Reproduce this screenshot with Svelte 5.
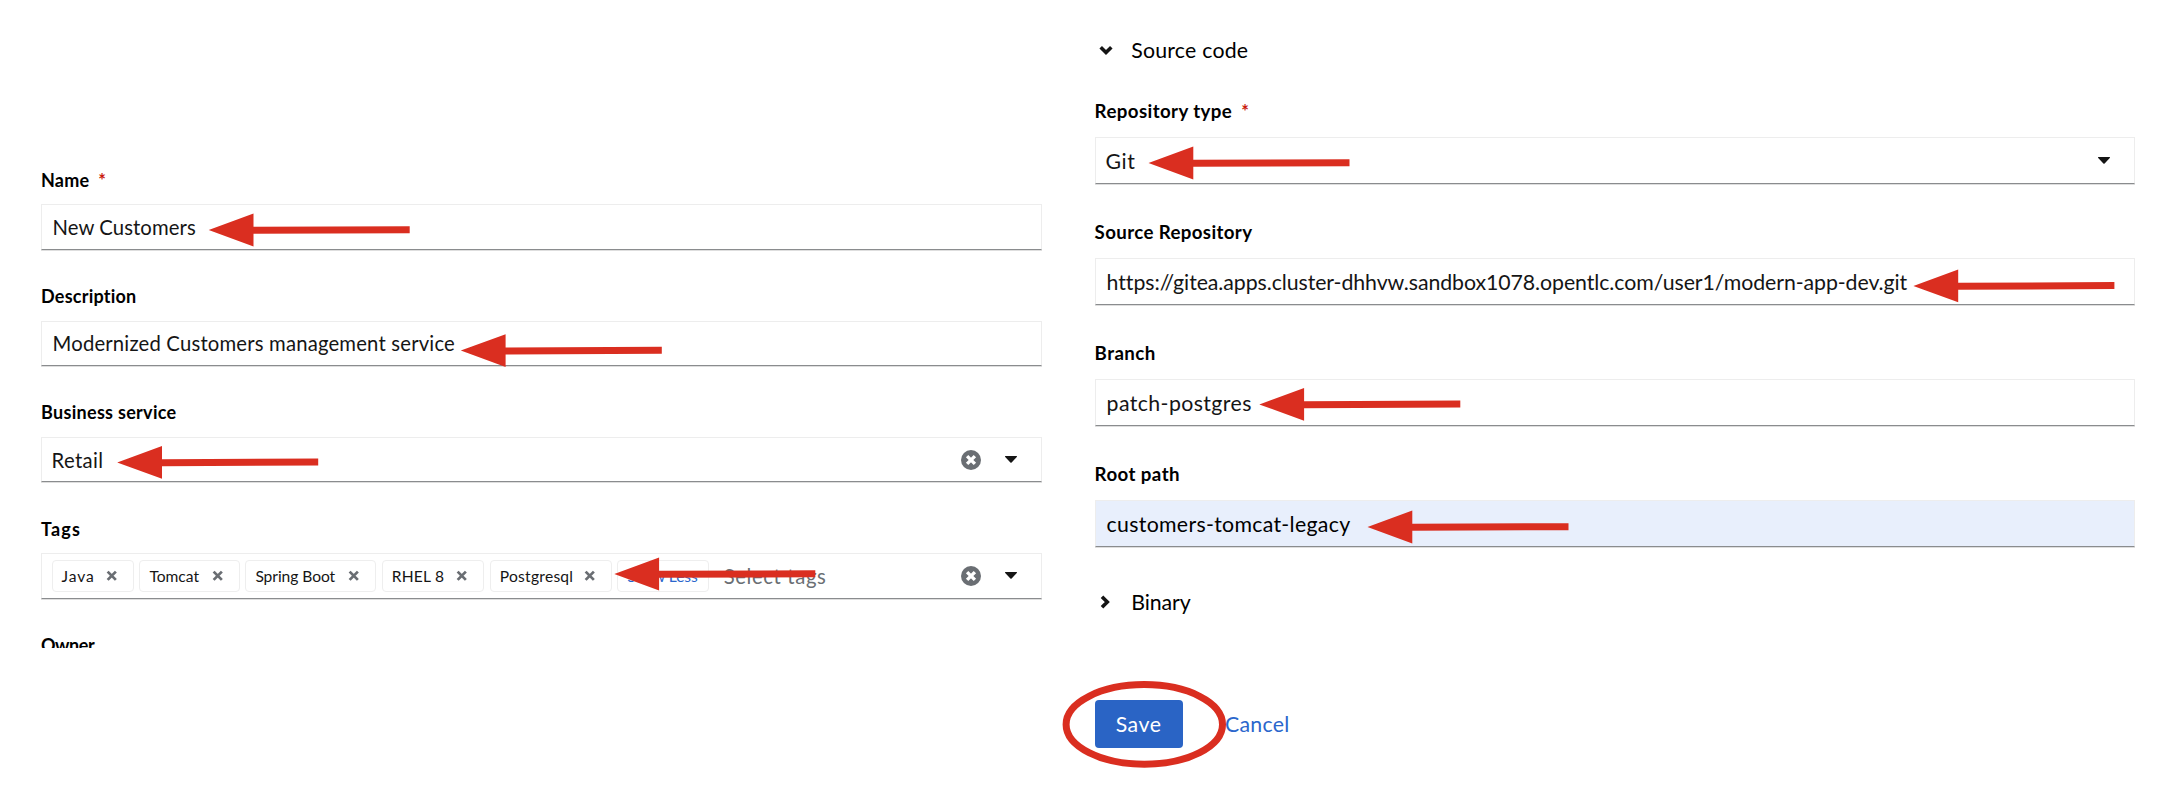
<script>
  const chips = [
    { text: 'Java', size: 82, ink: 31.5 },
    { text: 'Tomcat', size: 100.2, ink: 50 },
    { text: 'Spring Boot', size: 130.7, ink: 80.2 },
    { text: 'RHEL 8', size: 102.2, ink: 51.5 },
    { text: 'Postgresql', size: 121.7, ink: 71.5 }
  ];
  const basics = [
    { label: 'Name', labelInk: 47.4, required: true, value: 'New Customers', ink: 141.8 },
    { label: 'Description', labelInk: 94.4, value: 'Modernized Customers management service', ink: 400.6 },
    { label: 'Business service', labelInk: 134.6, value: 'Retail', ink: 49.6, select: true, clear: true },
    { label: 'Tags', labelInk: 39, chips, select: true, clear: true },
    { label: 'Owner', labelInk: 54, labelOnly: true }
  ];
  const source = [
    { label: 'Repository type', labelInk: 136.7, required: true, value: 'Git', ink: 28.8, select: true },
    {
      label: 'Source Repository', labelInk: 157.6, ink: 799.3,
      value: 'https://gitea.apps.cluster-dhhvw.sandbox1078.opentlc.com/user1/modern-app-dev.git'
    },
    { label: 'Branch', labelInk: 59.2, value: 'patch-postgres', ink: 143.6 },
    { label: 'Root path', labelInk: 83.4, value: 'customers-tomcat-legacy', ink: 243.6, filled: true }
  ];
  const arrows = [
    [208.7, 230], [460.8, 350.6], [117.2, 462.4], [614.3, 574],
    [1148.5, 163], [1913.4, 285.9], [1259.3, 404.4], [1367.5, 527]
  ];

  const ctx = document.createElement('canvas').getContext('2d');
  // Letter spacing that sets a text to a given ink width.
  function track(text, ink, size, weight = 400) {
    ctx.font = `${weight} ${size}px Lato`;
    const m = ctx.measureText(text);
    const natural = m.actualBoundingBoxLeft + m.actualBoundingBoxRight;
    return `${((ink - natural) / (text.length - 1)).toFixed(3)}px`;
  }
</script>

{#snippet field(f, labelSize, size)}
  <div class="field">
    <div class="label">
      <span style:letter-spacing={track(f.label, f.labelInk, labelSize, 700)}>{f.label}</span>
      {#if f.required}<span class="star">*</span>{/if}
    </div>
    {#if !f.labelOnly}
      <div class="control" class:select={f.select} class:filled={f.filled}>
        {#if f.chips}
          <div class="chips">
            {#each f.chips as c}
              <div class="chip" style:width="{c.size}px">
                <span style:letter-spacing={track(c.text, c.ink, 15.6)}>{c.text}</span>
                <svg width="11.5" height="11.5" viewBox="0 0 12 12"><path d="M1.7 1.7L10.3 10.3M10.3 1.7L1.7 10.3" stroke="#6a6e73" stroke-width="2.9" /></svg>
              </div>
            {/each}
            <div class="chip more"><span style:letter-spacing={track('Show Less', 71, 15.6)}>Show Less</span></div>
          </div>
          <span class="placeholder" style:letter-spacing={track('Select tags', 101.5, size)}>Select tags</span>
        {:else}
          <span class="value" style:letter-spacing={track(f.value, f.ink, size)}>{f.value}</span>
        {/if}
        {#if f.clear}
          <svg class="clear" width="20" height="20" viewBox="0 0 20 20">
            <circle cx="10" cy="10" r="10" fill="#6a6e73" />
            <path d="M6.1 6.1L13.9 13.9M13.9 6.1L6.1 13.9" stroke="#fff" stroke-width="3.4" />
          </svg>
        {/if}
        {#if f.select}
          <svg class="caret" width="12" height="7" viewBox="0 0 12 7"><path d="M.3 0H11.7Q12.2 .5 11.8 .9L6.6 6.6Q6 7.1 5.4 6.6L.2 .9Q-.2 .5 .3 0Z" fill="#151515" /></svg>
        {/if}
      </div>
    {/if}
  </div>
{/snippet}

<main>
  <section class="basics">
    {#each basics as f}{@render field(f, 18, 20.3)}{/each}
  </section>

  <section class="source">
    <div class="toggle">
      <svg width="14" height="14" viewBox="0 0 14 14"><path d="M1.7 4.2L7 9.5L12.3 4.2" /></svg>
      <span style:letter-spacing={track('Source code', 116.7, 21.3)}>Source code</span>
    </div>
    <div class="fields">
      {#each source as f}{@render field(f, 18.7, 21.3)}{/each}
    </div>
    <div class="toggle binary">
      <svg width="14" height="14" viewBox="0 0 14 14"><path d="M3 1.7L8.3 7L3 12.3" /></svg>
      <span style:letter-spacing={track('Binary', 58.5, 21.3)}>Binary</span>
    </div>
    <div class="actions">
      <button class="save"><span style:letter-spacing={track('Save', 45, 21.3)}>Save</span></button>
      <button class="cancel"><span style:letter-spacing={track('Cancel', 62.3, 21.3)}>Cancel</span></button>
    </div>
  </section>

  <svg class="marks" width="2168" height="800" viewBox="0 0 2168 800">
    {#each arrows as [x, y]}
      <path transform="translate({x} {y})" d="M0 0L44.8 -16.4V-3.2L201 -3.8V3.2L44.8 3.8V16.4Z" fill="#da2e20" />
    {/each}
    <ellipse cx="1144.3" cy="724.4" rx="78.2" ry="39.8" fill="none" stroke="#da2e20" stroke-width="7" />
  </svg>
</main>

<style>
  :global(body) { background: #fff; }
  main {
    position: relative;
    display: flex;
    align-items: flex-start;
    width: 2168px;
    height: 800px;
    overflow: hidden;
    box-sizing: border-box;
    font-family: Lato, sans-serif;
    color: #151515;
    white-space: nowrap;
  }
  section { box-sizing: border-box; flex: none; }
  .basics {
    width: 1042px;
    height: 648px;
    padding: 167.8px 0 0 41px;
    overflow: hidden;
    font-size: 20.3px;
  }
  .basics .field { height: 116.3px; }
  .source {
    width: 1126px;
    padding: 36px 33px 0 52.6px;
    font-size: 21.3px;
  }
  .source .field { height: 121px; }

  .label {
    display: flex;
    height: 24px;
    margin-bottom: 12.6px;
    font-size: 18px;
    line-height: 25px;
    font-weight: 700;
    color: #000;
  }
  .source .label { height: 26px; line-height: 27px; font-size: 18.7px; }
  .star {
    margin-left: 9px;
    font-size: 18px;
    font-weight: 700;
    color: #c9190b;
  }
  .control {
    display: flex;
    align-items: center;
    box-sizing: border-box;
    height: 45.4px;
    padding: 0 24px 0 10.5px;
    border: 1px solid #ededed;
    border-bottom: 1px solid #8a8c8e;
    box-shadow: 0 1px 0 #dedede;
  }
  .control.select { padding-left: 9.6px; }
  .source .control { height: 47.4px; padding-left: 11px; }
  .source .control.select { padding-left: 9.8px; }
  .filled { background: #e8effc; color: #000; }
  .value { flex: 1; }

  .chips { display: flex; gap: 5.8px; }
  .chip {
    display: flex;
    align-items: center;
    justify-content: space-between;
    box-sizing: border-box;
    height: 32.5px;
    padding: 0 15.5px 0 9px;
    border: 1px solid #eee;
    border-radius: 4px;
    font-size: 15.6px;
  }
  .chip svg { flex: none; }
  .more { width: 91.3px; padding-right: 0; color: #2b66cc; }
  .placeholder { flex: 1; margin-left: 15px; color: #6a6e73; }
  .clear { flex: none; margin-right: 24.5px; }
  .caret { flex: none; }

  .toggle {
    display: flex;
    align-items: center;
    gap: 18.4px;
    height: 28px;
    padding-left: 4.2px;
    color: #000;
  }
  .toggle path { fill: none; stroke: #151515; stroke-width: 3.6; }
  .fields { padding-top: 34.4px; height: 484px; }
  .binary { margin-top: 6px; }
  .actions { display: flex; gap: 42.3px; margin-top: 84px; }
  button {
    height: 47.3px;
    padding: 0 0 1px;
    border: 0;
    background: none;
    font: inherit;
  }
  .save {
    width: 88px;
    border-radius: 4px;
    background: #2a64c5;
    color: #fff;
  }
  .cancel { color: #2b66cc; }
  .marks { position: absolute; left: 0; top: 0; pointer-events: none; }
</style>
